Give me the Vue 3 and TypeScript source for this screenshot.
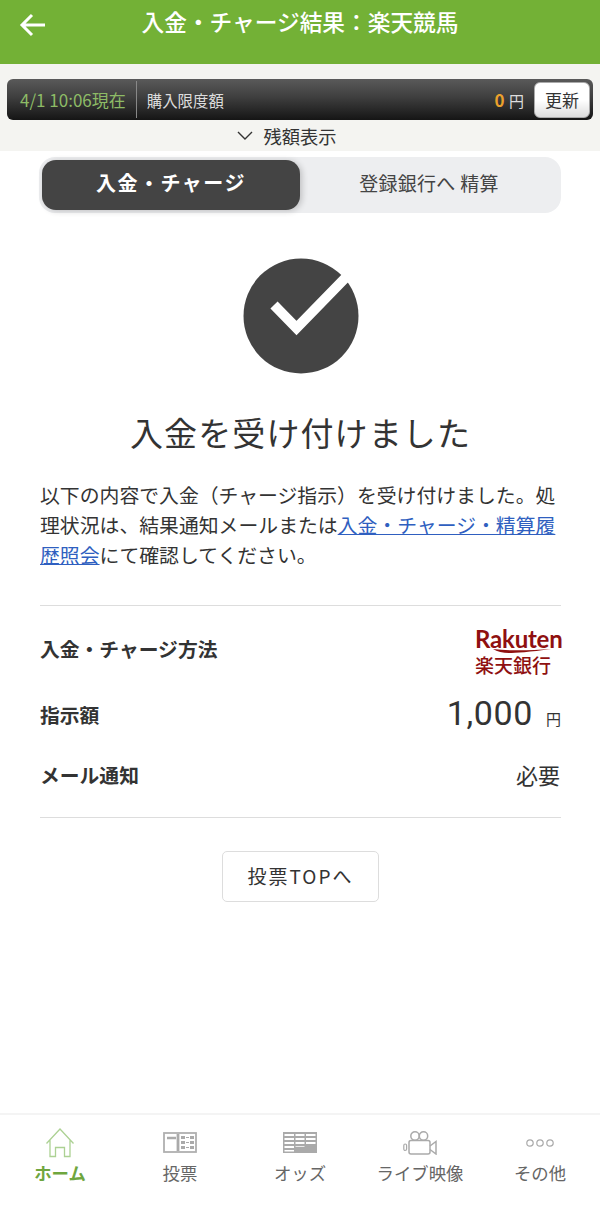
<script setup lang="ts">
const navItems = [
  { key: "home", label: "ホーム", active: true },
  { key: "vote", label: "投票", active: false },
  { key: "odds", label: "オッズ", active: false },
  { key: "live", label: "ライブ映像", active: false },
  { key: "more", label: "その他", active: false },
];
</script>

<template>
  <div class="page">
    <header class="topbar">
      <svg class="back" width="26" height="24" viewBox="0 0 26 24">
        <path d="M13 2 3 12l10 10M3 12h23" fill="none" stroke="#fff" stroke-width="3" />
      </svg>
      <h1>入金・チャージ結果：楽天競馬</h1>
    </header>

    <section class="balance">
      <div class="limit-bar">
        <span class="time">4/1 10:06現在</span>
        <span class="limit-label">購入限度額</span>
        <span class="amount"><b>0</b> 円</span>
        <button class="refresh">更新</button>
      </div>
      <div class="toggle">
        <svg width="16" height="10" viewBox="0 0 16 10">
          <path d="M1 1l7 7 7-7" fill="none" stroke="#333" stroke-width="1.4" />
        </svg>
        <span>残額表示</span>
      </div>
    </section>

    <main class="content">
      <div class="tabs">
        <div class="tab active">入金・チャージ</div>
        <div class="tab">登録銀行へ 精算</div>
      </div>

      <svg class="check" width="116" height="116" viewBox="0 0 116 116">
        <circle cx="58" cy="58" r="57.500" fill="#444" />
        <path d="M31 47l22.500 23L112 10" fill="none" stroke="#fff" stroke-width="10" />
      </svg>

      <h2>入金を受け付けました</h2>

      <p class="message">
        以下の内容で入金（チャージ指示）を受け付けました。処理状況は、結果通知メールまたは<a href="#">入金・チャージ・精算履歴照会</a>にて確認してください。
      </p>

      <div class="details">
        <div class="row method">
          <span class="label">入金・チャージ方法</span>
          <div class="bank-logo">
            <span class="logo-en">Rakuten</span>
            <svg class="logo-swoosh" width="86" height="4" viewBox="0 0 86 4">
              <path d="M18 0C35 2 55 1.500 76 0 55 3 40 4 34 4 28 4 22 2.500 18 0z" fill="#8f1010" />
            </svg>
            <span class="logo-ja">楽天銀行</span>
          </div>
        </div>
        <div class="row sum">
          <span class="label">指示額</span>
          <span class="value"><span class="big">1,000</span><span class="unit">円</span></span>
        </div>
        <div class="row mail">
          <span class="label">メール通知</span>
          <span class="need">必要</span>
        </div>
      </div>

      <button class="top-btn">投票TOPへ</button>
    </main>

    <nav class="bottom-nav">
      <div v-for="item in navItems" :key="item.key" class="nav-item" :class="{ on: item.active }">
        <div class="nav-icon">
          <svg v-if="item.key === 'home'" width="30" height="30" viewBox="0 0 30 30">
            <path d="M1.500 15.500 15 1l13.500 14.500M5 11.500v17h5.500v-9h9v9H25v-17" fill="none" stroke="#acd193" stroke-width="1.300" />
          </svg>
          <svg v-else-if="item.key === 'vote'" width="34" height="21" viewBox="0 0 34 21">
            <rect x="1" y="1" width="32" height="19" fill="none" stroke="#b0b0b0" stroke-width="1.800" />
            <path d="M4 6h9" stroke="#aaa" stroke-width="2.500" />
            <path d="M15 2v17" stroke="#aaa" stroke-width="2.800" />
            <path d="M18 4h4v3h-4zM18 9h4v3h-4zM18 14h4v3h-4zM27 4h4v3h-4zM27 9h4v3h-4zM27 14h4v3h-4z" fill="#aaa" />
            <path d="M23 5.500h3M23 10.500h3M23 15.500h3" stroke="#aaa" />
          </svg>
          <svg v-else-if="item.key === 'odds'" width="34" height="21" viewBox="0 0 34 21">
            <rect width="34" height="21" fill="#aaa" />
            <path d="M1.500 2h9.500v2H1.500zM12.500 2h9v2h-9zM23 2h9.500v2H23zM1.500 6h9.500v2H1.500zM12.500 6h9v2h-9zM23 6h9.500v2H23zM1.500 10h9.500v2H1.500zM12.500 10h9v2h-9zM23 10h9.500v2H23zM1.500 14h9.500v2H1.500zM12.500 14h9v.8h-9zM1.500 18h9.500v1.500H1.500z" fill="#fff" />
          </svg>
          <svg v-else-if="item.key === 'live'" width="34" height="24" viewBox="0 0 34 24">
            <circle cx="12" cy="5" r="4.200" fill="none" stroke="#aaa" stroke-width="1.500" />
            <circle cx="20.500" cy="5" r="4.200" fill="none" stroke="#aaa" stroke-width="1.500" />
            <rect x="6" y="9.500" width="21" height="13.500" rx="2" fill="none" stroke="#aaa" stroke-width="1.500" />
            <path d="M27 15l6-4.500V23l-6-4.500" fill="none" stroke="#aaa" stroke-width="1.500" />
            <rect x="0.800" y="13" width="2.800" height="6.500" rx="1.400" fill="none" stroke="#aaa" stroke-width="1.200" />
          </svg>
          <svg v-else width="30" height="10" viewBox="0 0 30 10">
            <circle cx="5" cy="5" r="3.200" fill="none" stroke="#aaa" stroke-width="1.200" />
            <circle cx="15" cy="5" r="3.200" fill="none" stroke="#aaa" stroke-width="1.200" />
            <circle cx="25" cy="5" r="3.200" fill="none" stroke="#aaa" stroke-width="1.200" />
          </svg>
        </div>
        <span class="nav-label">{{ item.label }}</span>
      </div>
    </nav>
  </div>
</template>

<style scoped>
.page {
  width: 600px;
  height: 1209px;
  display: flex;
  flex-direction: column;
  background: #fff;
  color: #333;
  font-family: "Noto Sans CJK JP", "Noto Sans", sans-serif;
  overflow: hidden;
}

.topbar {
  height: 64px;
  background: #73b136;
  position: relative;
  flex-shrink: 0;
}

.topbar h1 {
  margin: 0;
  padding-top: 6px;
  text-align: center;
  font-size: 22.700px;
  line-height: 32px;
  font-weight: 500;
  color: #fff;
}

.back {
  position: absolute;
  left: 19px;
  top: 13px;
}

.balance {
  background: #f4f4f1;
  height: 87px;
  padding: 15px 7px 0;
  box-sizing: border-box;
  flex-shrink: 0;
}

.limit-bar {
  height: 41px;
  border-radius: 6px;
  background: linear-gradient(#5a5a5a, #3e3e3e 45%, #151515);
  display: flex;
  align-items: center;
  padding: 0 3px 0 13px;
  box-sizing: border-box;
}

.time {
  color: #8dbb66;
  font-size: 17px;
  padding-right: 10px;
  height: 37px;
  line-height: 37px;
  white-space: nowrap;
  border-right: 1px solid #888;
}

.limit-label {
  color: #ddd;
  font-size: 15.400px;
  margin-left: 10px;
  flex: 1;
}

.amount {
  color: #ddd;
  font-size: 15px;
  margin-right: 10px;
}

.amount b {
  color: #eba12c;
  font-size: 17px;
  margin-right: 1px;
}

.refresh {
  width: 56px;
  height: 36px;
  padding: 0;
  border: 1px solid #aaa;
  border-radius: 6px;
  background: linear-gradient(#fff 50%, #ddd);
  color: #333;
  font-family: inherit;
  font-size: 17px;
}

.toggle {
  height: 32px;
  display: flex;
  align-items: center;
  justify-content: center;
  gap: 10px;
  font-size: 18.300px;
  color: #333;
  padding-right: 26px;
}

.content {
  flex: 1;
  padding: 6px 39px 0 40px;
  display: flex;
  flex-direction: column;
  align-items: center;
}

.tabs {
  width: 522px;
  height: 56px;
  margin-left: -1px;
  flex-shrink: 0;
  display: flex;
  padding: 3px;
  box-sizing: border-box;
  border-radius: 16px;
  background: #edeef0;
}

.tab {
  flex: 1;
  display: flex;
  align-items: center;
  justify-content: center;
  font-size: 19px;
  letter-spacing: 0.300px;
  color: #444;
  padding-bottom: 6px;
  box-sizing: border-box;
}

.tab.active {
  flex: 0 0 258px;
  height: 50px;
  border-radius: 14px;
  background: #444;
  color: #fff;
  font-size: 20px;
  font-weight: 700;
  letter-spacing: 1.500px;
  box-shadow: 2px 1px 6px rgba(0, 0, 0, 0.2);
}

.check {
  margin-top: 45px;
  flex-shrink: 0;
}

h2 {
  margin: 34px 0 0;
  font-size: 33px;
  line-height: 48px;
  font-weight: 400;
  letter-spacing: 1.100px;
  color: #333;
}

.message {
  margin: 24px 0 0;
  width: 100%;
  font-size: 19.850px;
  line-height: 30px;
  color: #333;
}

.message a {
  color: #2f5fc0;
  text-decoration: underline;
}

.details {
  width: 100%;
  margin-top: 35px;
  padding: 12px 0 19px;
  border-top: 1px solid #ddd;
  border-bottom: 1px solid #ddd;
}

.row {
  display: flex;
  align-items: center;
  justify-content: space-between;
}

.row.method {
  height: 60px;
}

.row.sum {
  height: 72px;
}

.row.mail {
  height: 48px;
}

.label {
  font-size: 19.800px;
  font-weight: 700;
  color: #333;
}

.bank-logo {
  display: flex;
  flex-direction: column;
  color: #8f1010;
  width: 86px;
  margin-top: 9px;
}

.logo-en {
  font-family: Lato, sans-serif;
  font-size: 24px;
  font-weight: 700;
  line-height: 22px;
  letter-spacing: -0.200px;
}

.logo-swoosh {
  margin-top: -1px;
}

.logo-ja {
  font-size: 19px;
  line-height: 24px;
  font-weight: 500;
}

.value {
  display: flex;
  align-items: baseline;
  margin-bottom: 2px;
}

.big {
  font-family: Roboto, sans-serif;
  font-size: 34px;
  letter-spacing: 0.600px;
}

.unit {
  font-size: 15px;
  margin-left: 13px;
}

.need {
  font-size: 22px;
  margin-right: 1px;
}

.top-btn {
  margin-top: 33px;
  width: 157px;
  height: 51px;
  padding: 0 0 3px;
  background: #fff;
  border: 1px solid #ddd;
  border-radius: 5px;
  color: #333;
  font-family: inherit;
  font-size: 19px;
  letter-spacing: 2px;
}

.bottom-nav {
  height: 96px;
  flex-shrink: 0;
  display: flex;
  border-top: 2px solid #f4f4f4;
  box-sizing: border-box;
}

.nav-item {
  flex: 1;
  display: flex;
  flex-direction: column;
  align-items: center;
  color: #666;
}

.nav-icon {
  height: 42px;
  padding-top: 13px;
  box-sizing: border-box;
  display: flex;
  align-items: center;
  justify-content: center;
}

.nav-label {
  font-size: 17.400px;
  line-height: 26px;
  margin-top: 3px;
}

.nav-item.on {
  color: #6fa63e;
}

.nav-item.on .nav-label {
  font-weight: 700;
}
</style>
